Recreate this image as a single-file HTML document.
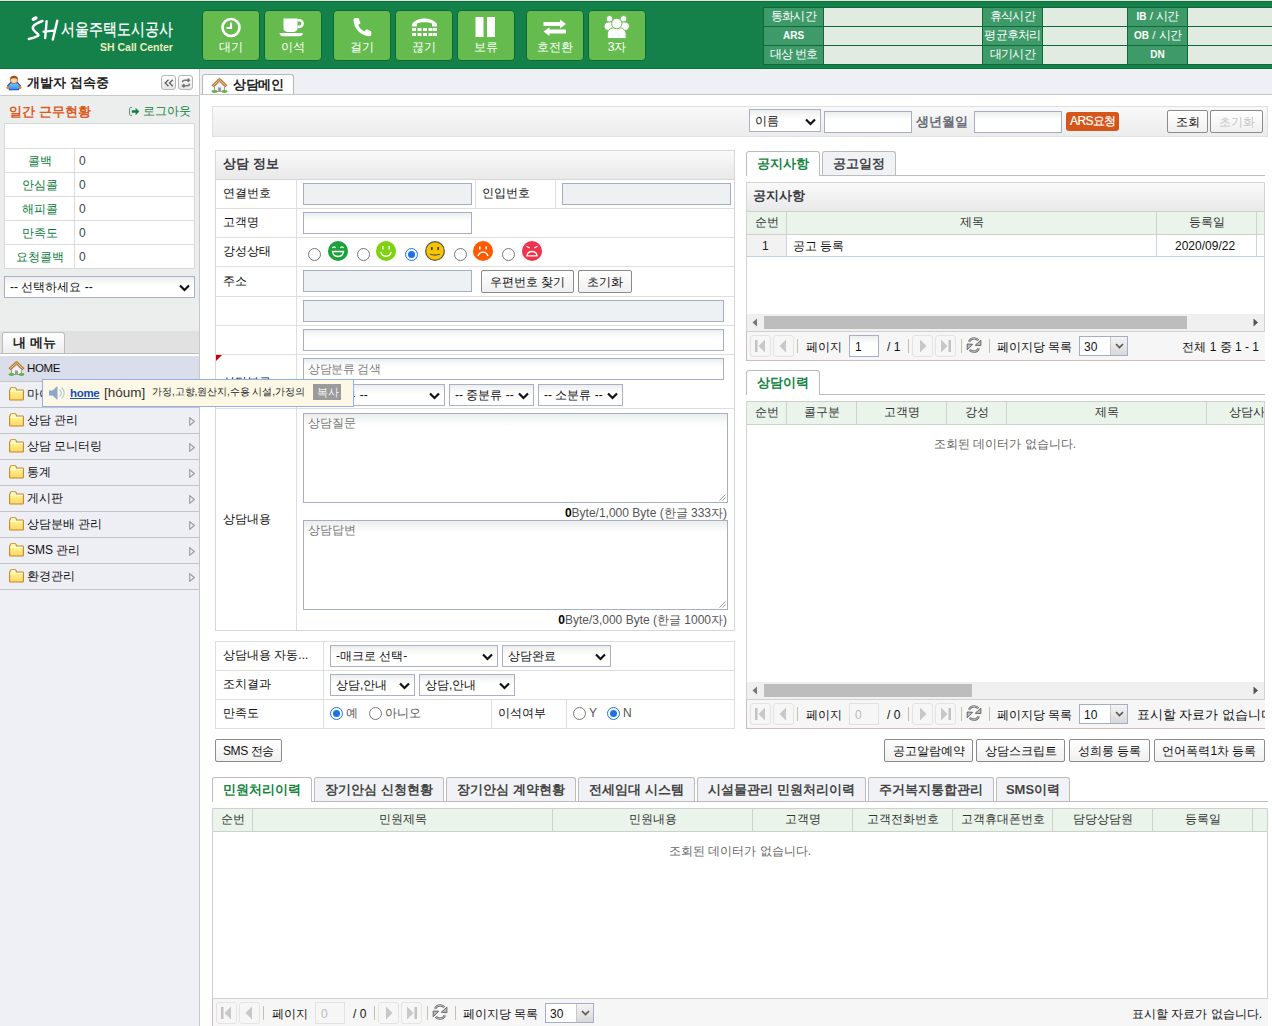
<!DOCTYPE html>
<html><head><meta charset="utf-8">
<style>
*{box-sizing:border-box}
html,body{margin:0;padding:0}
body{width:1272px;height:1026px;overflow:hidden;position:relative;background:#fff;font-family:"Liberation Sans",sans-serif;font-size:12px;color:#222}
.a{position:absolute}
.t{position:absolute;white-space:nowrap;line-height:1}
/* header */
#hdr{left:0;top:0;width:1272px;height:69px;background:#14804a}
#hdr:before{content:"";position:absolute;left:0;top:0;width:100%;height:1px;background:#e6e0e6}
#hdr:after{content:"";position:absolute;left:0;top:1px;width:100%;height:1px;background:#0a7636}
#hdr .bl{position:absolute;left:0;top:68px;width:100%;height:1px;background:#0a7535}
.hb{position:absolute;top:10px;width:58px;height:51px;background:#66bb4f;border:1px solid #0c6a38;border-radius:4px;color:#fff}
.hb svg{position:absolute;left:0;top:0}
.hb span{position:absolute;left:0;width:100%;top:30px;text-align:center;font-size:12px;line-height:12px}
#itab{left:763px;top:7px;border-collapse:collapse}
.ic{position:absolute;height:18px;line-height:17px;text-align:center;color:#fff;font-size:11.5px;letter-spacing:-0.8px}
.il{background:#3e9a69}
.iv{background:#e2ebe2}

/* sidebar */
.sbg{background:#eceeee}
.stl{position:absolute;left:5px;width:69px;height:23px;line-height:25px;text-align:center;color:#0a7a38;font-size:12px}
.stv{position:absolute;left:75px;width:119px;height:23px;line-height:25px;padding-left:4px;color:#444;font-size:12px}
.mi{position:absolute;left:0;width:199px;height:26px;background:#eeeff5;border-bottom:1px solid #c4c4c4}
.mi .fd{position:absolute;left:9px;top:5px;width:15px;height:14px}
.mi .tx{position:absolute;left:27px;top:6px;font-size:12px;line-height:12px;color:#111;white-space:nowrap}
.mi .ar{position:absolute;left:189px;top:9px;width:6px;height:9px}
.sel{position:absolute;border:1px solid #abafc8;background:linear-gradient(#eceeee,#fff 45%);font-size:12px;color:#111;white-space:nowrap;overflow:hidden}
.sel .v{position:absolute;left:5px;top:50%;margin-top:-6px;line-height:12px}
.sel svg{position:absolute;right:4px;top:50%;margin-top:-3px}
.inp{position:absolute;border:1px solid #a7acc7;background:linear-gradient(#eceeee,#fff 40%)}
.inr{position:absolute;border:1px solid #a7acc7;background:#eef1f2}
.btn{position:absolute;border:1px solid #8b8b8b;border-radius:2px;background:linear-gradient(#fff,#f0f0f0);font-size:12px;line-height:12px;color:#111;text-align:center;white-space:nowrap}
.btn span{position:absolute;left:0;right:0;top:50%;margin-top:-6px}

/* main */
.pl{position:absolute;background:#fff;border:1px solid #d6d6d6}
.ph{position:absolute;background:linear-gradient(#f9f9f9,#e9e9e9);border-bottom:1px solid #d6d6d6}
.hl{position:absolute;height:1px;background:#dedede}
.vl{position:absolute;width:1px;background:#dedede}
.lb{position:absolute;font-size:12px;line-height:12px;color:#111;white-space:nowrap}
.tab{position:absolute;border:1px solid #bcbcbc;border-bottom:none;border-radius:3px 3px 0 0;background:#f1f2f6;font-size:13px;line-height:13px;font-weight:bold;color:#444;text-align:center;white-space:nowrap}
.tab.on{background:#fff;color:#14843f}
.tab span{position:absolute;left:0;right:0;top:50%;margin-top:-7px}
.gh{position:absolute;background:#eaf4ea;border-top:1px solid #cfcfcf;border-bottom:1px solid #cfcfcf}
.gc{position:absolute;top:0;height:100%;font-size:12px;color:#333;text-align:center;white-space:nowrap}
.gc span{position:absolute;left:0;right:0;top:50%;margin-top:-7px;line-height:12px}
.gv{position:absolute;width:1px;background:#d0d0d0}
.pg{position:absolute;background:#f6f6f6;border-top:1px solid #d0d0d0}
.pb{position:absolute;width:21px;height:22px;border:1px solid #e4e4e4;border-radius:3px}
.ps{position:absolute;width:1px;height:14px;background:#c8bfae}
.radio{position:absolute;width:13px;height:13px;border-radius:50%;border:1px solid #767676;background:#fff}
.radio.on{border:1px solid #1a73e8}
.radio.on:after{content:"";position:absolute;left:2px;top:2px;width:7px;height:7px;border-radius:50%;background:#1a73e8}
</style></head><body>

<!-- HEADER -->
<div id="hdr" class="a"><div class="bl"></div>
  <svg class="a" style="left:24px;top:12px" width="40" height="30" viewBox="0 0 40 30"><ellipse cx="10.6" cy="6.6" rx="3.2" ry="1.9" transform="rotate(-28 10.6 6.6)" fill="#fff"/><path d="M18.5 9C15 10.2 11.5 11.500 9.3 14.2 7.8 16.3 9.800 18.600 12.200 20.600 14 22.100 15.300 23 13.800 24 11.500 25.300 7.500 26.400 4.800 26.900" fill="none" stroke="#fff" stroke-width="2.5" stroke-linecap="round" stroke-linejoin="round"/><path d="M22.600 9.200L21.200 26M19.600 19.600L30 18.600M33.300 8.600L28.800 27.500" fill="none" stroke="#fff" stroke-width="2.4" stroke-linecap="round"/></svg>
  <div class="t" style="left:61px;top:21px;font-size:17px;color:#fff;-webkit-text-stroke:0.3px #fff;transform:scaleX(0.82);transform-origin:0 0">서울주택도시공사</div>
  <div class="t" style="left:100px;top:42px;font-size:10.5px;font-weight:bold;color:#eeeebb">SH Call Center</div>
  <!-- buttons -->
  <div class="hb" style="left:202px"><svg width="57" height="50"><circle cx="28" cy="16.5" r="8.5" fill="none" stroke="#fff" stroke-width="2.6"/><path d="M28 11.5v5.5h-4.5" fill="none" stroke="#fff" stroke-width="2.2"/></svg><span>대기</span></div>
  <div class="hb" style="left:264px"><svg width="58" height="51"><path d="M18.5 7.5h14v9.500c0 2.500-2 4-4.500 4h-5c-2.500 0-4.500-1.500-4.500-4z" fill="#fff"/><path d="M32.5 9.300h1.800a3.300 3.300 0 0 1 0 6.600H32.500" fill="none" stroke="#fff" stroke-width="2.6"/><path d="M14.5 22h23.500c-.3 2-1.800 3.300-3.800 3.300H18.300c-2 0-3.500-1.300-3.800-3.300z" fill="#fff"/></svg><span>이석</span></div>
  <div class="hb" style="left:333px"><svg width="57" height="50"><path transform="translate(-1,-1.5)" d="M22.5 8.5l3 0 2 5-2.2 2c1 2.8 3.3 5.2 6 6.5l2-2.2 5 2v3c0 1.2-1 2-2 2C28 26.5 20.8 19.2 20.5 10.5c0-1.1.9-2 2-2z" fill="#fff"/></svg><span>걸기</span></div>
  <div class="hb" style="left:395px"><svg width="57" height="50" viewBox="0 1 57 50"><path d="M16 14c3-4 8-5.5 12.5-5.5S38 10 41 14v2.5h-5v-3c-2-.8-4.5-1.2-7.5-1.2s-5.5.4-7.5 1.2v3h-5z" fill="#fff"/><g fill="#fff"><rect x="16" y="18" width="4" height="3"/><rect x="21.5" y="18" width="4" height="3"/><rect x="27" y="18" width="4" height="3"/><rect x="32.5" y="18" width="4" height="3"/><rect x="37" y="18" width="4" height="3"/><rect x="16" y="23" width="4" height="3"/><rect x="21.5" y="23" width="4" height="3"/><rect x="27" y="23" width="4" height="3"/><rect x="32.5" y="23" width="4" height="3"/><rect x="37" y="23" width="4" height="3"/></g></svg><span>끊기</span></div>
  <div class="hb" style="left:457px"><svg width="57" height="50"><rect x="17.5" y="6" width="8" height="20" fill="#fff"/><rect x="29" y="6" width="8" height="20" fill="#fff"/></svg><span>보류</span></div>
  <div class="hb" style="left:526px"><svg width="58" height="51"><path d="M16.5 11h16.5v-2.5l6 4.5-6 4.5v-2.5h-16.5z" fill="#fff"/><path d="M39 18.5h-16.5v-2.2l-6 4.3 6 4.3v-2.4h16.5z" fill="#fff"/></svg><span>호전환</span></div>
  <div class="hb" style="left:588px"><svg width="58" height="51"><g fill="#fff" stroke="#66bb4f" stroke-width="1"><circle cx="20.5" cy="7.9" r="3.4"/><circle cx="34.5" cy="7.9" r="3.4"/><rect x="15" y="11" width="11" height="8.5" rx="4.5"/><rect x="29.5" y="11" width="11" height="8.5" rx="4.5"/><path d="M18.3 27.6v-4.5c0-3.400 2.700-6.200 6.100-6.200h6.600c3.400 0 6.100 2.800 6.100 6.200v4.500z"/><circle cx="27.8" cy="12.5" r="5.2"/></g></svg><span>3자</span></div>
  <!-- info table -->
  <div class="a" style="left:763px;top:7px;width:509px;height:58px;background:#0d6a39"></div>
  <div class="ic il" style="left:764px;top:8px;width:59px">통화시간</div>
  <div class="ic iv" style="left:824px;top:8px;width:158px"></div>
  <div class="ic il" style="left:983px;top:8px;width:59px">휴식시간</div>
  <div class="ic iv" style="left:1043px;top:8px;width:84px"></div>
  <div class="ic il" style="left:1128px;top:8px;width:59px"><b style="font-size:10px;letter-spacing:0">IB</b><span style="letter-spacing:0"> / </span>시간</div>
  <div class="ic iv" style="left:1188px;top:8px;width:84px"></div>
  <div class="ic il" style="left:764px;top:27px;width:59px;font-weight:bold;font-size:10px;letter-spacing:0">ARS</div>
  <div class="ic iv" style="left:824px;top:27px;width:158px"></div>
  <div class="ic il" style="left:983px;top:27px;width:59px">평균후처리</div>
  <div class="ic iv" style="left:1043px;top:27px;width:84px"></div>
  <div class="ic il" style="left:1128px;top:27px;width:59px"><b style="font-size:10px;letter-spacing:0">OB</b><span style="letter-spacing:0"> / </span>시간</div>
  <div class="ic iv" style="left:1188px;top:27px;width:84px"></div>
  <div class="ic il" style="left:764px;top:46px;width:59px">대상 번호</div>
  <div class="ic iv" style="left:824px;top:46px;width:158px"></div>
  <div class="ic il" style="left:983px;top:46px;width:59px">대기시간</div>
  <div class="ic iv" style="left:1043px;top:46px;width:84px"></div>
  <div class="ic il" style="left:1128px;top:46px;width:59px;font-weight:bold;font-size:10px;letter-spacing:0">DN</div>
  <div class="ic iv" style="left:1188px;top:46px;width:84px"></div>
</div>



<!-- MAIN TAB STRIP -->
<div class="a" style="left:200px;top:69px;width:1072px;height:26px;background:#eef0f5;border-bottom:1px solid #c6c6c6"></div>
<div class="a" style="left:202px;top:74px;width:92px;height:20px;border:1px solid #b8b8b8;border-bottom:none;border-radius:3px 3px 0 0;background:#fff"></div>
<svg class="a" style="left:211px;top:78px" width="17" height="15" viewBox="0 0 17 15"><path d="M1.5 8.2L8.5 1.5l7 6.7" fill="none" stroke="#c07a30" stroke-width="2.8" stroke-linejoin="round"/><path d="M2.2 7.6L8.5 1.9l6.3 5.700" fill="none" stroke="#edc88a" stroke-width="1"/><path d="M3.5 8.5v5h10v-5L8.5 3.8z" fill="#f2f2f2" stroke="#8a8a8a" stroke-width="0.8"/><rect x="7" y="9.5" width="3" height="4" fill="#999"/><ellipse cx="3.5" cy="13.5" rx="3" ry="1.4" fill="#5fb446"/><ellipse cx="13.5" cy="13.5" rx="3" ry="1.4" fill="#5fb446"/></svg>
<div class="t" style="left:233px;top:78px;font-size:13px;font-weight:bold;color:#222;letter-spacing:-0.4px">상담메인</div>

<!-- SEARCH BAR -->
<div class="a" style="left:212px;top:106px;width:1056px;height:31px;border:1px solid #e0e0e0;background:linear-gradient(#f9f9f9,#ececec)"></div>
<div class="sel" style="left:749px;top:109px;width:72px;height:23px"><span class="v" style="left:5px">이름</span><svg width="11" height="8" viewBox="0 0 11 8"><path d="M1 1.5l4.5 4.5 4.5-4.5" fill="none" stroke="#111" stroke-width="2.2"/></svg></div>
<div class="inp" style="left:824px;top:111px;width:88px;height:22px"></div>
<div class="t" style="left:916px;top:115px;font-size:13px;font-weight:bold;color:#6a6c78">생년월일</div>
<div class="inp" style="left:974px;top:111px;width:88px;height:22px"></div>
<div class="a" style="left:1066px;top:112px;width:53px;height:19px;border-radius:3px;background:#d5561a"></div>
<div class="t" style="left:1070px;top:115px;font-size:12px;color:#fff;letter-spacing:-0.6px;-webkit-text-stroke:0.2px #fff">ARS요청</div>
<div class="btn" style="left:1167px;top:110px;width:41px;height:23px"><span>조회</span></div>
<div class="btn" style="left:1210px;top:110px;width:53px;height:23px;color:#c4c4c4"><span>초기화</span></div>

<!-- CONSULT INFO PANEL -->
<div class="pl" style="left:215px;top:150px;width:520px;height:481px"></div>
<div class="ph" style="left:216px;top:151px;width:518px;height:29px"></div>
<div class="t" style="left:223px;top:157px;font-size:13px;font-weight:bold;color:#3a3a44">상담 정보</div>
<div class="vl" style="left:296px;top:180px;height:450px"></div>
<div class="hl" style="left:216px;top:208px;width:518px"></div>
<div class="hl" style="left:216px;top:237px;width:518px"></div>
<div class="hl" style="left:216px;top:266px;width:518px"></div>
<div class="hl" style="left:216px;top:296px;width:518px"></div>
<div class="hl" style="left:216px;top:325px;width:518px"></div>
<div class="hl" style="left:216px;top:354px;width:518px"></div>
<div class="hl" style="left:216px;top:408px;width:518px"></div>
<div class="vl" style="left:475px;top:180px;height:28px"></div>
<div class="vl" style="left:555px;top:180px;height:28px"></div>
<div class="lb" style="left:223px;top:187px">연결번호</div>
<div class="inr" style="left:303px;top:183px;width:169px;height:22px"></div>
<div class="lb" style="left:482px;top:187px">인입번호</div>
<div class="inr" style="left:562px;top:183px;width:169px;height:22px"></div>
<div class="lb" style="left:223px;top:216px">고객명</div>
<div class="inp" style="left:303px;top:212px;width:169px;height:22px"></div>
<div class="lb" style="left:223px;top:245px">강성상태</div>
<div class="radio" style="left:308px;top:248px"></div>
<svg class="a" style="left:328px;top:241px" width="20" height="20" viewBox="0 0 20 20"><circle cx="10" cy="10" r="10" fill="#1aa33a"/><path d="M4.5 7.2c.5-1.8 2.6-1.8 3.1 0M12.4 7.2c.5-1.8 2.6-1.8 3.1 0" fill="none" stroke="#fff" stroke-width="1.3"/><path d="M4.5 10.5h11c-.5 3.2-2.700 5-5.5 5s-5-1.800-5.5-5z" fill="none" stroke="#fff" stroke-width="1.4"/></svg>
<div class="radio" style="left:357px;top:248px"></div>
<svg class="a" style="left:376px;top:241px" width="20" height="20" viewBox="0 0 20 20"><circle cx="10" cy="10" r="10" fill="#7fd20f"/><rect x="6" y="5" width="1.6" height="3.5" fill="#fff"/><rect x="12.4" y="5" width="1.6" height="3.5" fill="#fff"/><path d="M4.8 10.8c.6 2.800 2.700 4.500 5.200 4.500s4.600-1.700 5.200-4.500" fill="none" stroke="#fff" stroke-width="1.4"/></svg>
<div class="radio on" style="left:405px;top:248px"></div>
<svg class="a" style="left:425px;top:241px" width="20" height="20" viewBox="0 0 20 20"><circle cx="10" cy="10" r="9.3" fill="#f6c400" stroke="#555" stroke-width="1.2"/><rect x="6" y="6" width="1.6" height="3" fill="#333"/><rect x="12.4" y="6" width="1.6" height="3" fill="#333"/><path d="M5 13.3c3.300 1 6.700 1 10 0" fill="none" stroke="#555" stroke-width="1.2"/></svg>
<div class="radio" style="left:454px;top:248px"></div>
<svg class="a" style="left:473px;top:241px" width="20" height="20" viewBox="0 0 20 20"><circle cx="10" cy="10" r="10" fill="#ff5a00"/><rect x="6" y="5.5" width="1.6" height="3" fill="#fff"/><rect x="12.4" y="5.5" width="1.6" height="3" fill="#fff"/><path d="M5 15c.8-2.500 2.600-3.900 5-3.900s4.200 1.400 5 3.900" fill="none" stroke="#fff" stroke-width="1.4"/></svg>
<div class="radio" style="left:502px;top:248px"></div>
<svg class="a" style="left:522px;top:241px" width="20" height="20" viewBox="0 0 20 20"><circle cx="10" cy="10" r="10" fill="#f2314b"/><path d="M4.5 5.2l3.200 1.800M15.5 5.2l-3.200 1.800" stroke="#fff" stroke-width="1.3"/><path d="M5 14.800h10c-.3-2.600-2.300-4.300-5-4.300s-4.700 1.700-5 4.300z" fill="none" stroke="#fff" stroke-width="1.3"/></svg>
<div class="lb" style="left:223px;top:275px">주소</div>
<div class="inr" style="left:303px;top:270px;width:169px;height:22px"></div>
<div class="btn" style="left:481px;top:270px;width:93px;height:23px"><span>우편번호 찾기</span></div>
<div class="btn" style="left:578px;top:270px;width:54px;height:23px"><span>초기화</span></div>
<div class="inr" style="left:303px;top:300px;width:421px;height:22px"></div>
<div class="inp" style="left:303px;top:329px;width:421px;height:22px"></div>
<svg class="a" style="left:216px;top:355px" width="6" height="6"><path d="M0 0h6L0 6z" fill="#c00"/></svg>
<div class="lb" style="left:223px;top:376px">상담분류</div>
<div class="inp" style="left:303px;top:358px;width:421px;height:22px"><span class="lb" style="left:4px;top:4px;color:#808080;font-size:12px;line-height:12px;letter-spacing:-0.4px">상담분류 검색</span></div>
<div class="sel" style="left:303px;top:384px;width:142px;height:22px"><span class="v">-- 대분류 --</span><svg width="11" height="8" viewBox="0 0 11 8"><path d="M1 1.5l4.5 4.5 4.5-4.5" fill="none" stroke="#111" stroke-width="2.2"/></svg></div>
<div class="sel" style="left:449px;top:384px;width:85px;height:22px"><span class="v">-- 중분류 --</span><svg width="11" height="8" viewBox="0 0 11 8"><path d="M1 1.5l4.5 4.5 4.5-4.5" fill="none" stroke="#111" stroke-width="2.2"/></svg></div>
<div class="sel" style="left:538px;top:384px;width:85px;height:22px"><span class="v">-- 소분류 --</span><svg width="11" height="8" viewBox="0 0 11 8"><path d="M1 1.5l4.5 4.5 4.5-4.5" fill="none" stroke="#111" stroke-width="2.2"/></svg></div>
<div class="lb" style="left:223px;top:513px">상담내용</div>
<div class="inp" style="left:303px;top:413px;width:425px;height:90px;background:linear-gradient(#eceeee,#fff 12px)"><span class="lb" style="left:4px;top:3px;color:#777;font-size:12px;line-height:12px">상담질문</span><svg style="position:absolute;right:1px;bottom:1px" width="8" height="8"><path d="M7.5 1.5L1.5 7.5M7.5 4.5L4.5 7.5" stroke="#888" stroke-width="0.9"/></svg></div>
<div class="lb" style="right:545px;top:507px;color:#555"><b style="color:#000">0</b>Byte/1,000 Byte (한글 333자)</div>
<div class="inp" style="left:303px;top:520px;width:425px;height:90px;background:linear-gradient(#eceeee,#fff 12px)"><span class="lb" style="left:4px;top:3px;color:#777;font-size:12px;line-height:12px">상담답변</span><svg style="position:absolute;right:1px;bottom:1px" width="8" height="8"><path d="M7.5 1.5L1.5 7.5M7.5 4.5L4.5 7.5" stroke="#888" stroke-width="0.9"/></svg></div>
<div class="lb" style="right:545px;top:614px;color:#555"><b style="color:#000">0</b>Byte/3,000 Byte (한글 1000자)</div>

<!-- TABLE 2 -->
<div class="pl" style="left:215px;top:641px;width:520px;height:88px;border-color:#dedede"></div>
<div class="hl" style="left:216px;top:670px;width:518px"></div>
<div class="hl" style="left:216px;top:699px;width:518px"></div>
<div class="vl" style="left:323px;top:642px;height:86px"></div>
<div class="vl" style="left:491px;top:700px;height:28px"></div>
<div class="vl" style="left:566px;top:700px;height:28px"></div>
<div class="lb" style="left:223px;top:649px">상담내용 자동...</div>
<div class="sel" style="left:330px;top:645px;width:168px;height:22px"><span class="v">-매크로 선택-</span><svg width="11" height="8" viewBox="0 0 11 8"><path d="M1 1.5l4.5 4.5 4.5-4.5" fill="none" stroke="#111" stroke-width="2.2"/></svg></div>
<div class="sel" style="left:502px;top:645px;width:109px;height:22px"><span class="v">상담완료</span><svg width="11" height="8" viewBox="0 0 11 8"><path d="M1 1.5l4.5 4.5 4.5-4.5" fill="none" stroke="#111" stroke-width="2.2"/></svg></div>
<div class="lb" style="left:223px;top:678px">조치결과</div>
<div class="sel" style="left:330px;top:674px;width:85px;height:22px"><span class="v">상담,안내</span><svg width="11" height="8" viewBox="0 0 11 8"><path d="M1 1.5l4.5 4.5 4.5-4.5" fill="none" stroke="#111" stroke-width="2.2"/></svg></div>
<div class="sel" style="left:419px;top:674px;width:96px;height:22px"><span class="v">상담,안내</span><svg width="11" height="8" viewBox="0 0 11 8"><path d="M1 1.5l4.5 4.5 4.5-4.5" fill="none" stroke="#111" stroke-width="2.2"/></svg></div>
<div class="lb" style="left:223px;top:707px">만족도</div>
<div class="radio on" style="left:330px;top:707px"></div>
<div class="lb" style="left:346px;top:707px;color:#555">예</div>
<div class="radio" style="left:369px;top:707px"></div>
<div class="lb" style="left:385px;top:707px;color:#555">아니오</div>
<div class="lb" style="left:498px;top:707px">이석여부</div>
<div class="radio" style="left:573px;top:707px"></div>
<div class="lb" style="left:589px;top:707px;color:#555">Y</div>
<div class="radio on" style="left:607px;top:707px"></div>
<div class="lb" style="left:623px;top:707px;color:#555">N</div>

<div class="btn" style="left:215px;top:739px;width:67px;height:23px"><span style="letter-spacing:-0.4px">SMS 전송</span></div>

<!-- RIGHT PANEL 1 -->
<div class="a" style="left:746px;top:175px;width:519px;height:1px;background:#bdbdbd"></div>
<div class="tab on" style="left:746px;top:151px;width:74px;height:25px"><span>공지사항</span></div>
<div class="tab" style="left:822px;top:151px;width:74px;height:24px"><span>공고일정</span></div>
<div class="pl" style="left:746px;top:182px;width:519px;height:179px;border-color:#d3d3d3"></div>
<div class="ph" style="left:747px;top:183px;width:517px;height:28px;border-bottom:none"></div>
<div class="t" style="left:753px;top:189px;font-size:13px;font-weight:bold;color:#3a3a44">공지사항</div>
<div class="gh" style="left:747px;top:211px;width:517px;height:24px">
  <div class="gc" style="left:0;width:39px"><span>순번</span></div>
  <div class="gv" style="left:39px;top:0;height:22px"></div>
  <div class="gc" style="left:40px;width:370px"><span>제목</span></div>
  <div class="gv" style="left:409px;top:0;height:22px"></div>
  <div class="gc" style="left:410px;width:99px"><span>등록일</span></div>
  <div class="gv" style="left:509px;top:0;height:22px"></div>
</div>
<div class="a" style="left:747px;top:235px;width:39px;height:21px;background:#f2f2f2"></div>
<div class="a" style="left:786px;top:235px;width:1px;height:21px;background:#c9d5e2"></div>
<div class="a" style="left:1156px;top:235px;width:1px;height:21px;background:#c9d5e2"></div>
<div class="a" style="left:1256px;top:235px;width:1px;height:21px;background:#c9d5e2"></div>
<div class="a" style="left:747px;top:256px;width:517px;height:1px;background:#c5d3e0"></div>
<div class="lb" style="left:762px;top:240px;color:#222">1</div>
<div class="lb" style="left:793px;top:240px;color:#111">공고 등록</div>
<div class="lb" style="left:1175px;top:240px;color:#111">2020/09/22</div>
<div class="a" style="left:747px;top:314px;width:517px;height:17px;background:#f0f0f0"></div>
<svg class="a" style="left:752px;top:318px" width="6" height="9"><path d="M5 0.5v8L0.5 4.5z" fill="#777"/></svg>
<div class="a" style="left:764px;top:316px;width:423px;height:13px;background:#bdbdbd"></div>
<svg class="a" style="left:1253px;top:318px" width="6" height="9"><path d="M0.5 0.5v8L5 4.5z" fill="#555"/></svg>
<div class="pg" style="left:746px;top:331px;width:519px;height:30px;border-bottom:1px solid #cdbcbc;border-left:1px solid #cdbcbc;overflow:hidden"><div class="pb" style="left:3px;top:3px"><svg width="21" height="22" viewBox="1 1 21 22"><rect x="5" y="5" width="2.5" height="12" fill="#c2c2c2"/><path d="M15 4.5v13L8.5 11z" fill="#c8c8c8"/></svg></div><div class="pb" style="left:26px;top:3px"><svg width="21" height="22" viewBox="1 1 21 22"><path d="M13 4.5v13L6.5 11z" fill="#c8c8c8"/></svg></div><div class="ps" style="left:50px;top:7px"></div><div class="lb" style="left:59px;top:9px">페이지</div><div class="a" style="left:102px;top:3px;width:30px;height:22px;background:linear-gradient(#eceeee,#fff 40%);border:1px solid #a7acc7"><span class="lb" style="left:5px;top:5px;color:#111">1</span></div><div class="lb" style="left:140px;top:9px">/ 1</div><div class="ps" style="left:161px;top:7px"></div><div class="pb" style="left:165px;top:3px"><svg width="21" height="22" viewBox="1 1 21 22"><path d="M8 4.5v13l6.5-6.5z" fill="#c8c8c8"/></svg></div><div class="pb" style="left:188px;top:3px"><svg width="21" height="22" viewBox="1 1 21 22"><path d="M6 4.5v13l6.5-6.5z" fill="#c8c8c8"/><rect x="13.5" y="5" width="2.5" height="12" fill="#c2c2c2"/></svg></div><div class="ps" style="left:214px;top:7px"></div><div class="a" style="left:219px;top:5px"><svg width="16" height="16" viewBox="0 0 16 16"><path d="M3 4.800C4.300 2.200 6.300 1.200 8.300 1.300c1.600.1 3 .8 3.900 2" fill="none" stroke="#6a6a6a" stroke-width="2.300"/><path d="M3 4.800C4.300 2.200 6.300 1.200 8.300 1.300c1.600.1 3 .8 3.900 2" fill="none" stroke="#d8d8d8" stroke-width="0.8"/><path d="M9.300 8.200L14.900 8.600 14.900 3.200z" fill="#bdbdbd" stroke="#666" stroke-width="1"/><path d="M12.900 11.200C11.700 13.800 9.700 14.800 7.700 14.700c-1.600-.1-3-.8-3.900-2" fill="none" stroke="#6a6a6a" stroke-width="2.300"/><path d="M12.900 11.200C11.700 13.800 9.700 14.800 7.700 14.700c-1.600-.1-3-.8-3.900-2" fill="none" stroke="#d8d8d8" stroke-width="0.8"/><path d="M6.700 7.300L1.200 7 1.200 12.800z" fill="#bdbdbd" stroke="#666" stroke-width="1"/></svg></div><div class="ps" style="left:242px;top:7px"></div><div class="lb" style="left:250px;top:9px">페이지당 목록</div><div class="a" style="left:332px;top:4px;width:49px;height:20px;border:1px solid #a7acc7;background:#fff"><span class="lb" style="left:4px;top:4px">30</span><div class="a" style="right:0;top:0;width:17px;height:18px;background:linear-gradient(#f4f4f4,#d8d8d8);border-left:1px solid #c8c8c8"><svg style="position:absolute;left:4px;top:6px" width="9" height="6" viewBox="0 0 9 6"><path d="M1 1l3.5 3.5L8 1" fill="none" stroke="#555" stroke-width="1.6"/></svg></div></div><div class="lb" style="right:6px;top:9px">전체 1 중 1 - 1</div></div>

<!-- RIGHT PANEL 2 -->
<div class="a" style="left:746px;top:394px;width:519px;height:1px;background:#bdbdbd"></div>
<div class="tab on" style="left:746px;top:370px;width:74px;height:25px"><span>상담이력</span></div>
<div class="pl" style="left:746px;top:401px;width:519px;height:328px;border-color:#d3d3d3"></div>
<div class="gh" style="left:747px;top:401px;width:517px;height:24px;overflow:hidden">
  <div class="gc" style="left:0;width:39px"><span>순번</span></div>
  <div class="gv" style="left:39px;top:0;height:22px"></div>
  <div class="gc" style="left:40px;width:69px"><span>콜구분</span></div>
  <div class="gv" style="left:109px;top:0;height:22px"></div>
  <div class="gc" style="left:110px;width:89px"><span>고객명</span></div>
  <div class="gv" style="left:199px;top:0;height:22px"></div>
  <div class="gc" style="left:200px;width:59px"><span>강성</span></div>
  <div class="gv" style="left:259px;top:0;height:22px"></div>
  <div class="gc" style="left:260px;width:199px"><span>제목</span></div>
  <div class="gv" style="left:459px;top:0;height:22px"></div>
  <div class="gc" style="left:460px;width:79px"><span>상담사</span></div>
</div>
<div class="lb" style="left:934px;top:438px;color:#666;font-size:12px;line-height:12px;letter-spacing:0">조회된 데이터가 없습니다.</div>
<div class="a" style="left:747px;top:682px;width:517px;height:17px;background:#f0f0f0"></div>
<svg class="a" style="left:752px;top:686px" width="6" height="9"><path d="M5 0.5v8L0.5 4.5z" fill="#777"/></svg>
<div class="a" style="left:764px;top:684px;width:208px;height:13px;background:#bdbdbd"></div>
<svg class="a" style="left:1253px;top:686px" width="6" height="9"><path d="M0.5 0.5v8L5 4.5z" fill="#555"/></svg>
<div class="pg" style="left:746px;top:699px;width:519px;height:30px;border-bottom:1px solid #cdbcbc;border-left:1px solid #cdbcbc;overflow:hidden"><div class="pb" style="left:3px;top:3px"><svg width="21" height="22" viewBox="1 1 21 22"><rect x="5" y="5" width="2.5" height="12" fill="#c2c2c2"/><path d="M15 4.5v13L8.5 11z" fill="#c8c8c8"/></svg></div><div class="pb" style="left:26px;top:3px"><svg width="21" height="22" viewBox="1 1 21 22"><path d="M13 4.5v13L6.5 11z" fill="#c8c8c8"/></svg></div><div class="ps" style="left:50px;top:7px"></div><div class="lb" style="left:59px;top:9px">페이지</div><div class="a" style="left:102px;top:3px;width:30px;height:22px;background:#f6f6f6;border:1px solid #e2e2e2"><span class="lb" style="left:5px;top:5px;color:#bbb">0</span></div><div class="lb" style="left:140px;top:9px">/ 0</div><div class="ps" style="left:161px;top:7px"></div><div class="pb" style="left:165px;top:3px"><svg width="21" height="22" viewBox="1 1 21 22"><path d="M8 4.5v13l6.5-6.5z" fill="#c8c8c8"/></svg></div><div class="pb" style="left:188px;top:3px"><svg width="21" height="22" viewBox="1 1 21 22"><path d="M6 4.5v13l6.5-6.5z" fill="#c8c8c8"/><rect x="13.5" y="5" width="2.5" height="12" fill="#c2c2c2"/></svg></div><div class="ps" style="left:214px;top:7px"></div><div class="a" style="left:219px;top:5px"><svg width="16" height="16" viewBox="0 0 16 16"><path d="M3 4.800C4.300 2.200 6.300 1.200 8.300 1.300c1.600.1 3 .8 3.900 2" fill="none" stroke="#6a6a6a" stroke-width="2.300"/><path d="M3 4.800C4.300 2.200 6.300 1.200 8.300 1.300c1.600.1 3 .8 3.900 2" fill="none" stroke="#d8d8d8" stroke-width="0.8"/><path d="M9.300 8.200L14.900 8.600 14.900 3.200z" fill="#bdbdbd" stroke="#666" stroke-width="1"/><path d="M12.900 11.200C11.700 13.800 9.700 14.800 7.700 14.700c-1.600-.1-3-.8-3.900-2" fill="none" stroke="#6a6a6a" stroke-width="2.300"/><path d="M12.900 11.200C11.700 13.800 9.700 14.800 7.700 14.700c-1.600-.1-3-.8-3.900-2" fill="none" stroke="#d8d8d8" stroke-width="0.8"/><path d="M6.700 7.300L1.200 7 1.200 12.800z" fill="#bdbdbd" stroke="#666" stroke-width="1"/></svg></div><div class="ps" style="left:242px;top:7px"></div><div class="lb" style="left:250px;top:9px">페이지당 목록</div><div class="a" style="left:332px;top:4px;width:49px;height:20px;border:1px solid #a7acc7;background:#fff"><span class="lb" style="left:4px;top:4px">10</span><div class="a" style="right:0;top:0;width:17px;height:18px;background:linear-gradient(#f4f4f4,#d8d8d8);border-left:1px solid #c8c8c8"><svg style="position:absolute;left:4px;top:6px" width="9" height="6" viewBox="0 0 9 6"><path d="M1 1l3.5 3.5L8 1" fill="none" stroke="#555" stroke-width="1.6"/></svg></div></div><div class="lb" style="left:390px;top:9px;font-size:12.5px">표시할 자료가 없습니다</div></div>

<div class="btn" style="left:884px;top:739px;width:89px;height:23px"><span>공고알람예약</span></div>
<div class="btn" style="left:976px;top:739px;width:89px;height:23px"><span>상담스크립트</span></div>
<div class="btn" style="left:1069px;top:739px;width:81px;height:23px"><span>성희롱 등록</span></div>
<div class="btn" style="left:1154px;top:739px;width:111px;height:23px"><span>언어폭력1차 등록</span></div>

<!-- BOTTOM TABS -->
<div class="a" style="left:212px;top:801px;width:1056px;height:1px;background:#bdbdbd"></div>
<div class="tab on" style="left:212px;top:777px;width:100px;height:25px"><span>민원처리이력</span></div>
<div class="tab" style="left:314px;top:777px;width:130px;height:24px"><span>장기안심 신청현황</span></div>
<div class="tab" style="left:446px;top:777px;width:130px;height:24px"><span>장기안심 계약현황</span></div>
<div class="tab" style="left:578px;top:777px;width:117px;height:24px"><span>전세임대 시스템</span></div>
<div class="tab" style="left:697px;top:777px;width:169px;height:24px"><span>시설물관리 민원처리이력</span></div>
<div class="tab" style="left:868px;top:777px;width:126px;height:24px"><span>주거복지통합관리</span></div>
<div class="tab" style="left:996px;top:777px;width:74px;height:24px"><span>SMS이력</span></div>

<div class="pl" style="left:212px;top:808px;width:1056px;height:230px;border-color:#cfcfcf"></div>
<div class="gh" style="left:213px;top:808px;width:1054px;height:24px">
  <div class="gc" style="left:0;width:39px"><span>순번</span></div>
  <div class="gv" style="left:39px;top:0;height:22px"></div>
  <div class="gc" style="left:40px;width:299px"><span>민원제목</span></div>
  <div class="gv" style="left:339px;top:0;height:22px"></div>
  <div class="gc" style="left:340px;width:199px"><span>민원내용</span></div>
  <div class="gv" style="left:539px;top:0;height:22px"></div>
  <div class="gc" style="left:540px;width:99px"><span>고객명</span></div>
  <div class="gv" style="left:639px;top:0;height:22px"></div>
  <div class="gc" style="left:640px;width:99px"><span>고객전화번호</span></div>
  <div class="gv" style="left:739px;top:0;height:22px"></div>
  <div class="gc" style="left:740px;width:99px"><span>고객휴대폰번호</span></div>
  <div class="gv" style="left:839px;top:0;height:22px"></div>
  <div class="gc" style="left:840px;width:99px"><span>담당상담원</span></div>
  <div class="gv" style="left:939px;top:0;height:22px"></div>
  <div class="gc" style="left:940px;width:99px"><span>등록일</span></div>
  <div class="gv" style="left:1039px;top:0;height:22px"></div>
</div>
<div class="lb" style="left:669px;top:845px;color:#666;font-size:12px;line-height:12px;letter-spacing:0">조회된 데이터가 없습니다.</div>
<div class="pg" style="left:212px;top:998px;width:1056px;height:29px;border-left:1px solid #cdbcbc"><div class="pb" style="left:3px;top:3px"><svg width="21" height="22" viewBox="1 1 21 22"><rect x="5" y="5" width="2.5" height="12" fill="#c2c2c2"/><path d="M15 4.5v13L8.5 11z" fill="#c8c8c8"/></svg></div><div class="pb" style="left:26px;top:3px"><svg width="21" height="22" viewBox="1 1 21 22"><path d="M13 4.5v13L6.5 11z" fill="#c8c8c8"/></svg></div><div class="ps" style="left:50px;top:7px"></div><div class="lb" style="left:59px;top:9px">페이지</div><div class="a" style="left:102px;top:3px;width:30px;height:22px;background:#f6f6f6;border:1px solid #e2e2e2"><span class="lb" style="left:5px;top:5px;color:#bbb">0</span></div><div class="lb" style="left:140px;top:9px">/ 0</div><div class="ps" style="left:161px;top:7px"></div><div class="pb" style="left:165px;top:3px"><svg width="21" height="22" viewBox="1 1 21 22"><path d="M8 4.5v13l6.5-6.5z" fill="#c8c8c8"/></svg></div><div class="pb" style="left:188px;top:3px"><svg width="21" height="22" viewBox="1 1 21 22"><path d="M6 4.5v13l6.5-6.5z" fill="#c8c8c8"/><rect x="13.5" y="5" width="2.5" height="12" fill="#c2c2c2"/></svg></div><div class="ps" style="left:214px;top:7px"></div><div class="a" style="left:219px;top:5px"><svg width="16" height="16" viewBox="0 0 16 16"><path d="M3 4.800C4.300 2.200 6.300 1.200 8.300 1.300c1.600.1 3 .8 3.900 2" fill="none" stroke="#6a6a6a" stroke-width="2.300"/><path d="M3 4.800C4.300 2.200 6.300 1.200 8.300 1.300c1.600.1 3 .8 3.900 2" fill="none" stroke="#d8d8d8" stroke-width="0.8"/><path d="M9.300 8.200L14.900 8.600 14.900 3.200z" fill="#bdbdbd" stroke="#666" stroke-width="1"/><path d="M12.900 11.200C11.700 13.800 9.700 14.800 7.700 14.700c-1.600-.1-3-.8-3.900-2" fill="none" stroke="#6a6a6a" stroke-width="2.300"/><path d="M12.900 11.200C11.700 13.800 9.700 14.800 7.700 14.700c-1.600-.1-3-.8-3.900-2" fill="none" stroke="#d8d8d8" stroke-width="0.8"/><path d="M6.700 7.300L1.200 7 1.200 12.800z" fill="#bdbdbd" stroke="#666" stroke-width="1"/></svg></div><div class="ps" style="left:242px;top:7px"></div><div class="lb" style="left:250px;top:9px">페이지당 목록</div><div class="a" style="left:332px;top:4px;width:49px;height:20px;border:1px solid #a7acc7;background:#fff"><span class="lb" style="left:4px;top:4px">30</span><div class="a" style="right:0;top:0;width:17px;height:18px;background:linear-gradient(#f4f4f4,#d8d8d8);border-left:1px solid #c8c8c8"><svg style="position:absolute;left:4px;top:6px" width="9" height="6" viewBox="0 0 9 6"><path d="M1 1l3.5 3.5L8 1" fill="none" stroke="#555" stroke-width="1.6"/></svg></div></div><div class="lb" style="right:6px;top:9px">표시할 자료가 없습니다.</div></div>

<svg width="0" height="0" style="position:absolute"><defs><linearGradient id="fg" x1="0" y1="0" x2="0" y2="1"><stop offset="0" stop-color="#ffff9c"/><stop offset="1" stop-color="#ffd46a"/></linearGradient></defs></svg>
<!-- SIDEBAR -->
<div class="a" style="left:0;top:69px;width:199px;height:957px;background:#eff0f5"></div>
<div class="a" style="left:199px;top:69px;width:1px;height:957px;background:#c8c8c8"></div>
<div class="a" style="left:0;top:69px;width:199px;height:27px;background:#fff;border-bottom:1px solid #c9c9c9"></div>
<svg class="a" style="left:0;top:70px" width="30" height="25" viewBox="0 0 30 25"><defs><linearGradient id="ub" x1="0" y1="0" x2="0" y2="1"><stop offset="0" stop-color="#6fd0ff"/><stop offset="1" stop-color="#3a8cf0"/></linearGradient></defs><path d="M10.600 12.600L7.600 15.800 9.600 19.700H18.400L20.400 15.800 17.400 12.600z" fill="url(#ub)" stroke="#1c3fbf" stroke-width="1.1" stroke-linejoin="round"/><circle cx="8" cy="17.600" r="1.600" fill="#e8851c"/><circle cx="20" cy="17.600" r="1.600" fill="#e8851c"/><circle cx="14" cy="9.800" r="3.800" fill="#f9d3ab" stroke="#b5651d" stroke-width="0.8"/><path d="M10.200 9.800C10.200 7 11.900 6 14 6s3.800 1 3.800 3.800C17 8.700 15.700 8.200 14 8.200s-3 .5-3.800 1.600z" fill="#9c4c12"/></svg>
<div class="t" style="left:27px;top:76px;font-size:13px;font-weight:bold;color:#222">개발자 접속중</div>
<div class="a" style="left:161px;top:75px;width:15px;height:15px;border:1px solid #b5b5b5;border-radius:3px;background:linear-gradient(#fff,#e6e6e6)"><svg style="position:absolute;left:2px;top:3px" width="10" height="8" viewBox="0 0 10 8"><path d="M4.5 0.8L1.2 4l3.3 3.2M8.8 0.8L5.5 4l3.3 3.2" fill="none" stroke="#666" stroke-width="1.4"/></svg></div>
<div class="a" style="left:178px;top:75px;width:15px;height:15px;border:1px solid #b5b5b5;border-radius:3px;background:linear-gradient(#fff,#e6e6e6)"><svg style="position:absolute;left:2px;top:2px" width="10" height="10" viewBox="0 0 10 10"><path d="M1.5 4.2C1.5 2.8 2.5 2.3 3.8 2.3H8M6.6 0.6L8.5 2.3 6.6 4M8.5 5.8c0 1.4-1 1.9-2.3 1.9H2M3.4 6L1.5 7.7 3.4 9.4" fill="none" stroke="#777" stroke-width="1.5"/></svg></div>
<div class="a sbg" style="left:0;top:96px;width:199px;height:235px"></div>
<div class="t" style="left:9px;top:105px;font-size:13px;font-weight:bold;color:#dd5a1e">일간 근무현황</div>
<svg class="a" style="left:128px;top:106px" width="12" height="11" viewBox="0 0 12 11"><path d="M4.2 1.6H2.6c-.7 0-1.100.4-1.100 1.100v5.600c0 .7.4 1.100 1.100 1.100h1.600" fill="none" stroke="#5f8f78" stroke-width="1"/><path d="M3.800 4.200h3.800V1.800L11.300 5.500 7.600 9.200V6.800H3.800z" fill="#128040"/></svg>
<div class="t" style="left:143px;top:105px;font-size:12px;color:#168040">로그아웃</div>
<div class="a" style="left:4px;top:123px;width:191px;height:146px;background:#fff;border:1px solid #d9d9d9"></div>
<div class="a" style="left:5px;top:148px;width:189px;height:1px;background:#dcdcdc"></div>
<div class="a" style="left:5px;top:172px;width:189px;height:1px;background:#dcdcdc"></div>
<div class="a" style="left:5px;top:196px;width:189px;height:1px;background:#dcdcdc"></div>
<div class="a" style="left:5px;top:220px;width:189px;height:1px;background:#dcdcdc"></div>
<div class="a" style="left:5px;top:244px;width:189px;height:1px;background:#dcdcdc"></div>
<div class="a" style="left:74px;top:149px;width:1px;height:119px;background:#dcdcdc"></div>
<div class="stl" style="top:149px">콜백</div><div class="stv" style="top:149px">0</div>
<div class="stl" style="top:173px">안심콜</div><div class="stv" style="top:173px">0</div>
<div class="stl" style="top:197px">해피콜</div><div class="stv" style="top:197px">0</div>
<div class="stl" style="top:221px">만족도</div><div class="stv" style="top:221px">0</div>
<div class="stl" style="top:245px">요청콜백</div><div class="stv" style="top:245px">0</div>
<div class="sel" style="left:4px;top:276px;width:191px;height:22px"><span class="v">-- 선택하세요 --</span><svg width="11" height="8" viewBox="0 0 11 8"><path d="M1 1.5l4.5 4.5 4.5-4.5" fill="none" stroke="#111" stroke-width="2.2"/></svg></div>
<div class="a" style="left:0;top:331px;width:199px;height:23px;background:#e1e1e1;border-bottom:1px solid #bdbdbd"></div>
<div class="a" style="left:2px;top:332px;width:63px;height:21px;border:1px solid #bdbdbd;border-bottom:none;border-radius:3px 3px 0 0;background:linear-gradient(#fff,#ededed)"></div>
<div class="t" style="left:13px;top:336px;font-size:13px;font-weight:bold;color:#222;letter-spacing:0">내 메뉴</div>
<div class="a" style="left:0;top:354px;width:199px;height:2px;background:#fff"></div>
<div class="mi" style="top:356px;background:#d9deea"><svg style="position:absolute;left:8px;top:5px" width="17" height="15" viewBox="0 0 17 15"><path d="M1.5 8.2L8.5 1.5l7 6.7" fill="none" stroke="#c07a30" stroke-width="2.8" stroke-linejoin="round"/><path d="M2.2 7.6L8.5 1.9l6.3 5.700" fill="none" stroke="#edc88a" stroke-width="1"/><path d="M3.5 8.5v5h10v-5L8.5 3.8z" fill="#f2f2f2" stroke="#8a8a8a" stroke-width="0.8"/><rect x="7" y="9.5" width="3" height="4" fill="#999"/><ellipse cx="3.5" cy="13.5" rx="3" ry="1.4" fill="#5fb446"/><ellipse cx="13.5" cy="13.5" rx="3" ry="1.4" fill="#5fb446"/></svg><span class="tx" style="left:27px;font-size:11.5px;top:6px;letter-spacing:-0.4px">HOME</span></div>
<div class="mi" style="top:382px"><svg class="fd" viewBox="0 0 15 14"><path d="M0.600 3.600v8.700c0 .4.3.7.7.7h12.400c.4 0 .7-.3.7-.7V3.800c0-.4-.3-.7-.7-.7H7.600L7 1.300c-.1-.3-.4-.6-.7-.6H2.300c-.3 0-.6.2-.7.5z" fill="url(#fg)" stroke="#c4891c" stroke-width="1.100"/><path d="M1.300 4.200H13.800" stroke="#fff" stroke-width="1"/><path d="M2.200 1.800H6.200" stroke="#fff" stroke-width="0.8"/></svg><span class="tx">마이메뉴</span><svg class="ar" viewBox="0 0 6 9"><path d="M0.7 0.7v7.6L5.3 4.5z" fill="none" stroke="#9a9a9a" stroke-width="1.1"/></svg></div>
<div class="mi" style="top:408px"><svg class="fd" viewBox="0 0 15 14"><path d="M0.600 3.600v8.700c0 .4.3.7.7.7h12.400c.4 0 .7-.3.7-.7V3.800c0-.4-.3-.7-.7-.7H7.600L7 1.300c-.1-.3-.4-.6-.7-.6H2.300c-.3 0-.6.2-.7.5z" fill="url(#fg)" stroke="#c4891c" stroke-width="1.100"/><path d="M1.300 4.200H13.800" stroke="#fff" stroke-width="1"/><path d="M2.200 1.800H6.200" stroke="#fff" stroke-width="0.8"/></svg><span class="tx">상담 관리</span><svg class="ar" viewBox="0 0 6 9"><path d="M0.7 0.7v7.6L5.3 4.5z" fill="none" stroke="#9a9a9a" stroke-width="1.1"/></svg></div>
<div class="mi" style="top:434px"><svg class="fd" viewBox="0 0 15 14"><path d="M0.600 3.600v8.700c0 .4.3.7.7.7h12.400c.4 0 .7-.3.7-.7V3.800c0-.4-.3-.7-.7-.7H7.600L7 1.300c-.1-.3-.4-.6-.7-.6H2.300c-.3 0-.6.2-.7.5z" fill="url(#fg)" stroke="#c4891c" stroke-width="1.100"/><path d="M1.300 4.200H13.800" stroke="#fff" stroke-width="1"/><path d="M2.200 1.800H6.200" stroke="#fff" stroke-width="0.8"/></svg><span class="tx">상담 모니터링</span><svg class="ar" viewBox="0 0 6 9"><path d="M0.7 0.7v7.6L5.3 4.5z" fill="none" stroke="#9a9a9a" stroke-width="1.1"/></svg></div>
<div class="mi" style="top:460px"><svg class="fd" viewBox="0 0 15 14"><path d="M0.600 3.600v8.700c0 .4.3.7.7.7h12.400c.4 0 .7-.3.7-.7V3.800c0-.4-.3-.7-.7-.7H7.600L7 1.300c-.1-.3-.4-.6-.7-.6H2.300c-.3 0-.6.2-.7.5z" fill="url(#fg)" stroke="#c4891c" stroke-width="1.100"/><path d="M1.300 4.200H13.800" stroke="#fff" stroke-width="1"/><path d="M2.200 1.800H6.200" stroke="#fff" stroke-width="0.8"/></svg><span class="tx">통계</span><svg class="ar" viewBox="0 0 6 9"><path d="M0.7 0.7v7.6L5.3 4.5z" fill="none" stroke="#9a9a9a" stroke-width="1.1"/></svg></div>
<div class="mi" style="top:486px"><svg class="fd" viewBox="0 0 15 14"><path d="M0.600 3.600v8.700c0 .4.3.7.7.7h12.400c.4 0 .7-.3.7-.7V3.800c0-.4-.3-.7-.7-.7H7.600L7 1.300c-.1-.3-.4-.6-.7-.6H2.300c-.3 0-.6.2-.7.5z" fill="url(#fg)" stroke="#c4891c" stroke-width="1.100"/><path d="M1.300 4.200H13.800" stroke="#fff" stroke-width="1"/><path d="M2.200 1.800H6.200" stroke="#fff" stroke-width="0.8"/></svg><span class="tx">게시판</span><svg class="ar" viewBox="0 0 6 9"><path d="M0.7 0.7v7.6L5.3 4.5z" fill="none" stroke="#9a9a9a" stroke-width="1.1"/></svg></div>
<div class="mi" style="top:512px"><svg class="fd" viewBox="0 0 15 14"><path d="M0.600 3.600v8.700c0 .4.3.7.7.7h12.400c.4 0 .7-.3.7-.7V3.800c0-.4-.3-.7-.7-.7H7.600L7 1.300c-.1-.3-.4-.6-.7-.6H2.300c-.3 0-.6.2-.7.5z" fill="url(#fg)" stroke="#c4891c" stroke-width="1.100"/><path d="M1.300 4.200H13.800" stroke="#fff" stroke-width="1"/><path d="M2.200 1.800H6.200" stroke="#fff" stroke-width="0.8"/></svg><span class="tx">상담분배 관리</span><svg class="ar" viewBox="0 0 6 9"><path d="M0.7 0.7v7.6L5.3 4.5z" fill="none" stroke="#9a9a9a" stroke-width="1.1"/></svg></div>
<div class="mi" style="top:538px"><svg class="fd" viewBox="0 0 15 14"><path d="M0.600 3.600v8.700c0 .4.3.7.7.7h12.400c.4 0 .7-.3.7-.7V3.800c0-.4-.3-.7-.7-.7H7.600L7 1.300c-.1-.3-.4-.6-.7-.6H2.300c-.3 0-.6.2-.7.5z" fill="url(#fg)" stroke="#c4891c" stroke-width="1.100"/><path d="M1.300 4.200H13.800" stroke="#fff" stroke-width="1"/><path d="M2.200 1.800H6.200" stroke="#fff" stroke-width="0.8"/></svg><span class="tx">SMS 관리</span><svg class="ar" viewBox="0 0 6 9"><path d="M0.7 0.7v7.6L5.3 4.5z" fill="none" stroke="#9a9a9a" stroke-width="1.1"/></svg></div>
<div class="mi" style="top:564px"><svg class="fd" viewBox="0 0 15 14"><path d="M0.600 3.600v8.700c0 .4.3.7.7.7h12.400c.4 0 .7-.3.7-.7V3.800c0-.4-.3-.7-.7-.7H7.600L7 1.300c-.1-.3-.4-.6-.7-.6H2.300c-.3 0-.6.2-.7.5z" fill="url(#fg)" stroke="#c4891c" stroke-width="1.100"/><path d="M1.300 4.200H13.800" stroke="#fff" stroke-width="1"/><path d="M2.200 1.800H6.200" stroke="#fff" stroke-width="0.8"/></svg><span class="tx">환경관리</span><svg class="ar" viewBox="0 0 6 9"><path d="M0.7 0.7v7.6L5.3 4.5z" fill="none" stroke="#9a9a9a" stroke-width="1.1"/></svg></div>


<!-- TOOLTIP -->
<div class="a" style="left:42px;top:379px;width:312px;height:28px;background:#fdf8e6;border:1px solid #8fb1e3"></div>
<svg class="a" style="left:48px;top:385px" width="17" height="16" viewBox="0 0 17 16"><path d="M1 5.5h3.5L9.5 1v14L4.5 10.5H1z" fill="#8ea6c8"/><path d="M11.5 4.5c1.2 1 1.8 2.200 1.8 3.500s-.6 2.500-1.800 3.500M13.5 2.500c1.800 1.500 2.700 3.300 2.700 5.500s-.9 4-2.700 5.500" fill="none" stroke="#b6c4d8" stroke-width="1.1"/></svg>
<div class="t" style="left:70px;top:388px;font-size:11.5px;font-weight:bold;color:#1a4fb0;text-decoration:underline;letter-spacing:-0.3px">home</div>
<div class="t" style="left:104px;top:386px;font-size:13.5px;color:#333">[hóum]</div>
<div class="t" style="left:152px;top:387px;font-size:10px;color:#222;letter-spacing:-0.05px">가정,고향,원산지,수용 시설,가정의</div>
<div class="a" style="left:313px;top:384px;width:28px;height:16px;background:#9a9a9a"></div>
<div class="t" style="left:317px;top:387px;font-size:11px;color:#f4f4f4">복사</div>

</body></html>
